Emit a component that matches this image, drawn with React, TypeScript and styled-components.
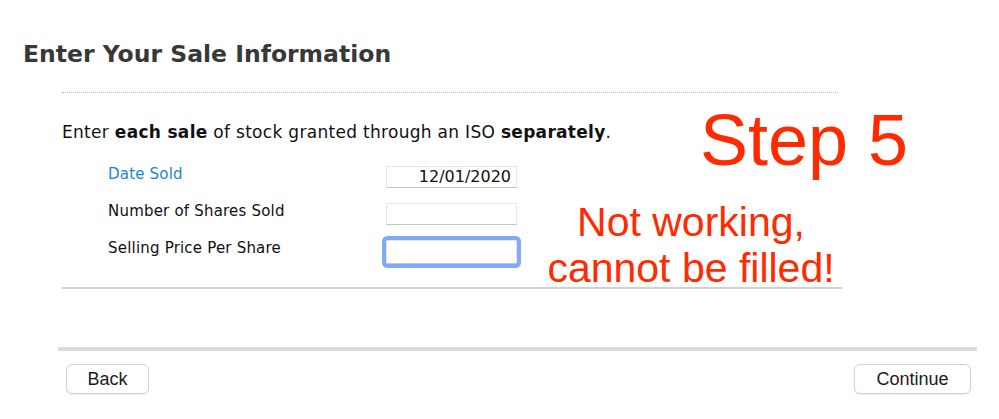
import React from "react";
import styled, { createGlobalStyle } from "styled-components";

const GlobalStyle = createGlobalStyle`
  body {
    margin: 0;
    background: #ffffff;
    font-family: "DejaVu Sans", "Liberation Sans", sans-serif;
    color: #111;
  }
`;

const fields = [
  { label: "Date Sold", value: "12/01/2020", link: true },
  { label: "Number of Shares Sold", value: "" },
  { label: "Selling Price Per Share", value: "", focused: true },
];

export default function App() {
  return (
    <Page>
      <GlobalStyle />
      <Title>Enter Your Sale Information</Title>

      <Section>
        <DottedRule />
        <Intro>
          Enter <b>each sale</b> of stock granted through an ISO <b>separately</b>.
        </Intro>

        <Fields>
          {fields.map((f) => (
            <FieldRow key={f.label}>
              <Label $link={f.link}>{f.label}</Label>
              <Input $focused={f.focused} defaultValue={f.value} readOnly />
            </FieldRow>
          ))}
        </Fields>

        <SolidRule />
      </Section>

      <Footer>
        <FooterBar />
        <ButtonRow>
          <Button $width={83}>Back</Button>
          <Button $width={117}>Continue</Button>
        </ButtonRow>
      </Footer>

      <Annotation>
        <StepNote>Step 5</StepNote>
        <Caption>
          Not working,
          <br />
          cannot be filled!
        </Caption>
      </Annotation>
    </Page>
  );
}

const Page = styled.div`
  position: relative;
  width: 999px;
  height: 419px;
  padding-top: 40px;
  box-sizing: border-box;
  overflow: hidden;
`;

const Title = styled.h1`
  margin: 0;
  padding-left: 23px;
  font-size: 23.5px;
  line-height: 28px;
  font-weight: bold;
  color: #383838;
`;

const Section = styled.section`
  margin-left: 62px;
  width: 780px;
`;

const DottedRule = styled.div`
  margin-top: 24px;
  width: 776px;
  border-top: 1px dotted #b5b5b5;
`;

const Intro = styled.p`
  margin: 29px 0 0;
  font-size: 17px;
  line-height: 20px;
  letter-spacing: 0.3px;
  color: #111;

  b {
    font-weight: bold;
  }
`;

const Fields = styled.div`
  margin-top: 16px;
  padding-left: 46px;
  display: flex;
  flex-direction: column;
`;

const FieldRow = styled.div`
  display: grid;
  grid-template-columns: 278px 131px;
  align-items: center;
  height: 37px;
`;

const Label = styled.span<{ $link?: boolean }>`
  font-size: 15px;
  line-height: 18px;
  letter-spacing: 0.2px;
  margin-top: -5px;
  color: ${(p) => (p.$link ? "#1a86d0" : "#111")};
`;

const Input = styled.input<{ $focused?: boolean }>`
  box-sizing: border-box;
  width: 131px;
  height: ${(p) => (p.$focused ? "24px" : "22px")};
  padding: 0 5px 0 0;
  border: 1px solid #e6e6e6;
  border-bottom-color: #c6c6c6;
  background: #fff;
  text-align: right;
  font-family: "DejaVu Sans", sans-serif;
  font-size: 16px;
  color: #111;
  outline: none;
  border-radius: ${(p) => (p.$focused ? "2px" : "0")};
  box-shadow: ${(p) => (p.$focused ? "0 0 0 4px #80aaf3" : "none")};
  margin-top: ${(p) => (p.$focused ? "2px" : "0")};
`;

const SolidRule = styled.div`
  margin-top: 18px;
  height: 2px;
  background: #d0d0d0;
`;

const Footer = styled.footer`
  margin-top: 58px;
  margin-left: 58px;
  width: 919px;
`;

const FooterBar = styled.div`
  height: 4px;
  background: #dcdcdc;
`;

const ButtonRow = styled.div`
  display: flex;
  justify-content: space-between;
  margin: 13px 6px 0 8px;
`;

const Button = styled.button<{ $width: number }>`
  box-sizing: border-box;
  width: ${(p) => p.$width}px;
  height: 30px;
  background: #fff;
  border: 1px solid #d2d2d2;
  border-radius: 6px;
  box-shadow: 0 1px 1px rgba(0, 0, 0, 0.08);
  font-family: "Liberation Sans", Arial, sans-serif;
  font-size: 18px;
  color: #1c1c1c;
  padding: 0;
`;

const Annotation = styled.div`
  position: absolute;
  left: 531px;
  top: 104px;
  width: 380px;
  color: #ff2a00;
  font-family: "Liberation Sans", Arial, sans-serif;
`;

const StepNote = styled.div`
  margin-left: 169px;
  font-size: 72px;
  line-height: 72px;
`;

const Caption = styled.div`
  margin-top: 23px;
  width: 320px;
  text-align: center;
  font-size: 41px;
  line-height: 46px;
`;
